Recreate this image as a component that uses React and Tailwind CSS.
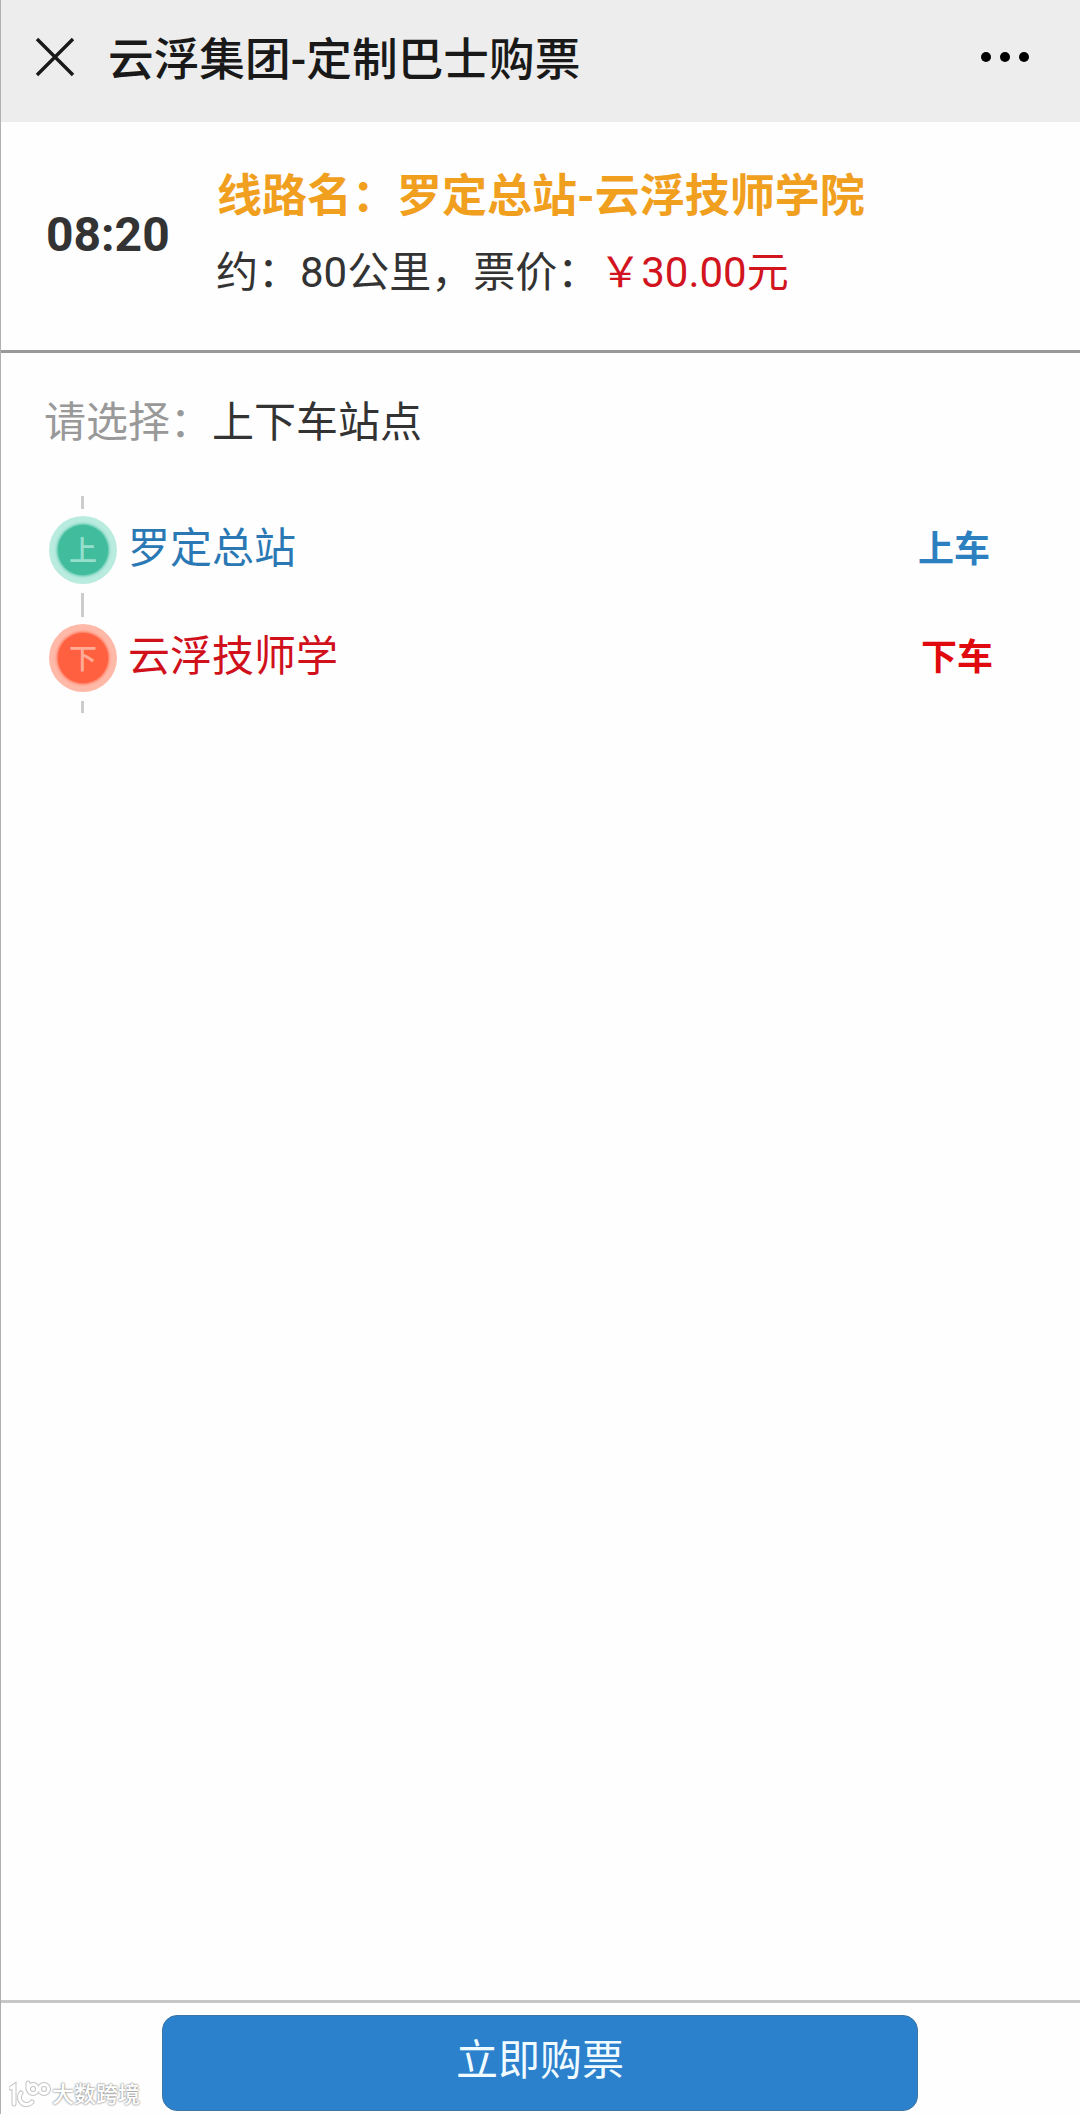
import React, { useState } from "react";

const stops = [
  { id: "up", mark: "上", name: "罗定总站", action: "上车" },
  { id: "down", mark: "下", name: "云浮技师学", action: "下车" },
];

const Header = ({ title }) => (
  <header className="flex h-[122px] items-center bg-[#ededed] pr-[51px] pl-[34px] text-[#191919]">
    <button aria-label="关闭">
      <svg className="block h-[40px] w-[40px] -translate-y-[4px]" viewBox="0 0 40 40" fill="none" stroke="currentColor" strokeWidth="3.4">
        <path d="M2 2 38 38M38 2 2 38" />
      </svg>
    </button>
    <h1 className="ml-[33px] text-[45.7px] leading-[60px] font-medium">{title}</h1>
    <button className="ml-auto flex gap-[9px] pb-[9px]" aria-label="更多">
      <span className="size-[10px] rounded-full bg-black" />
      <span className="size-[10px] rounded-full bg-black" />
      <span className="size-[10px] rounded-full bg-black" />
    </button>
  </header>
);

const RouteInfo = () => (
  <section className="-ml-px flex h-[231px] border-b-[3px] border-[#999]">
    <div className="w-[217px] pt-[83px] pl-[46px] text-[48px] leading-[60px] font-bold text-[#333]">
      08:20
    </div>
    <div className="pt-[43px]">
      <h2 className="text-[45px] leading-[64px] font-bold text-[#f0a01e]">
        线路名：罗定总站-云浮技师学院
      </h2>
      <p className="mt-[14px] -ml-px text-[42px] leading-[60px] text-[#333]">
        约：80公里，票价：<span className="text-[#d2141e]">￥30.00元</span>
      </p>
    </div>
  </section>
);

const StopRow = ({ stop }) => {
  const isUp = stop.id === "up";

  return (
    <li className="flex h-[68px] items-center">
      <span
        className={`flex size-[68px] shrink-0 items-center justify-center rounded-full ${
          isUp ? "bg-[#b9ebdf]" : "bg-[#ffb9a8]"
        }`}
      >
        <span
          className={`flex size-[50px] items-center justify-center rounded-full pt-[3px] text-[28px] leading-none font-medium ${
            isUp
              ? "bg-[#41bd9e] text-[#96dfcd] shadow-[0_0_3px_1px_#41bd9e]"
              : "bg-[#ff6040] text-[#ffab96] shadow-[0_0_3px_1px_#ff6040]"
          }`}
        >
          {stop.mark}
        </span>
      </span>
      <span
        className={`ml-[11px] pb-[3px] text-[42px] leading-[60px] ${
          isUp ? "text-[#2a78b4]" : "text-[#d0101a]"
        }`}
      >
        {stop.name}
      </span>
      <button
        className={`ml-auto text-[36px] leading-[50px] font-bold ${
          isUp ? "mr-[90px] text-[#2d80c0]" : "mr-[87px] text-[#e00a0e]"
        }`}
      >
        {stop.action}
      </button>
    </li>
  );
};

const Watermark = () => (
  <div className="absolute bottom-[3px] left-[8px] flex items-center gap-px">
    <svg className="h-[32px] w-[42px]" viewBox="0 0 42 32" fill="none" strokeLinecap="round">
      <g stroke="#c4c4c4" strokeWidth="5">
        <path d="M2 9 5 7v18M12 14a7 7 0 0 0 11 9M19 4v6" />
        <circle cx="24" cy="10" r="4.5" />
        <circle cx="35" cy="10" r="4.5" />
      </g>
      <g stroke="#fff" strokeWidth="3">
        <path d="M2 9 5 7v18M12 14a7 7 0 0 0 11 9M19 4v6" />
        <circle cx="24" cy="10" r="4.5" />
        <circle cx="35" cy="10" r="4.5" />
      </g>
    </svg>
    <span className="text-[22px] leading-[28px] font-medium text-white [text-shadow:0_0_2px_#888,0_0_2px_#999]">
      大数跨境
    </span>
  </div>
);

const App = () => {
  const [title] = useState("云浮集团-定制巴士购票");

  return (
    <div className="relative flex h-[2114px] w-[1080px] flex-col overflow-hidden border-l border-[#b0b0b0] bg-[#fefefe] font-[Roboto,'Noto_Sans_CJK_SC',sans-serif]">
      <Header title={title} />
      <RouteInfo />

      <main className="flex-1 pl-[48px]">
        <p className="-ml-[5px] pt-[40px] text-[42px] leading-[60px] text-[#333]">
          <span className="text-[#999]">请选择：</span>上下车站点
        </p>
        {/* Stop list with the dashed track between the markers */}
        <div className="mt-[43px] ml-[32px] h-[13px] w-[3px] bg-[#ccc]" />
        <ul className="py-[7px]">
          <StopRow stop={stops[0]} />
          <li className="mt-[9px] mb-[7px] ml-[32px] h-[24px] w-[3px] bg-[#ccc]" />
          <StopRow stop={stops[1]} />
        </ul>
        <div className="mt-[2px] ml-[32px] h-[12px] w-[3px] bg-[#ccc]" />
      </main>

      <footer className="-ml-px h-[114px] border-t-[3px] border-[#c6c8c7] pt-[12px]">
        <button className="mx-auto block h-[96px] w-[756px] rounded-[15px] border border-[#3d75a3] bg-[#2b81cc] pb-[4px] text-[42px] leading-[60px] text-[#f0fbff]">
          立即购票
        </button>
      </footer>
      <Watermark />
    </div>
  );
};

export default App;
